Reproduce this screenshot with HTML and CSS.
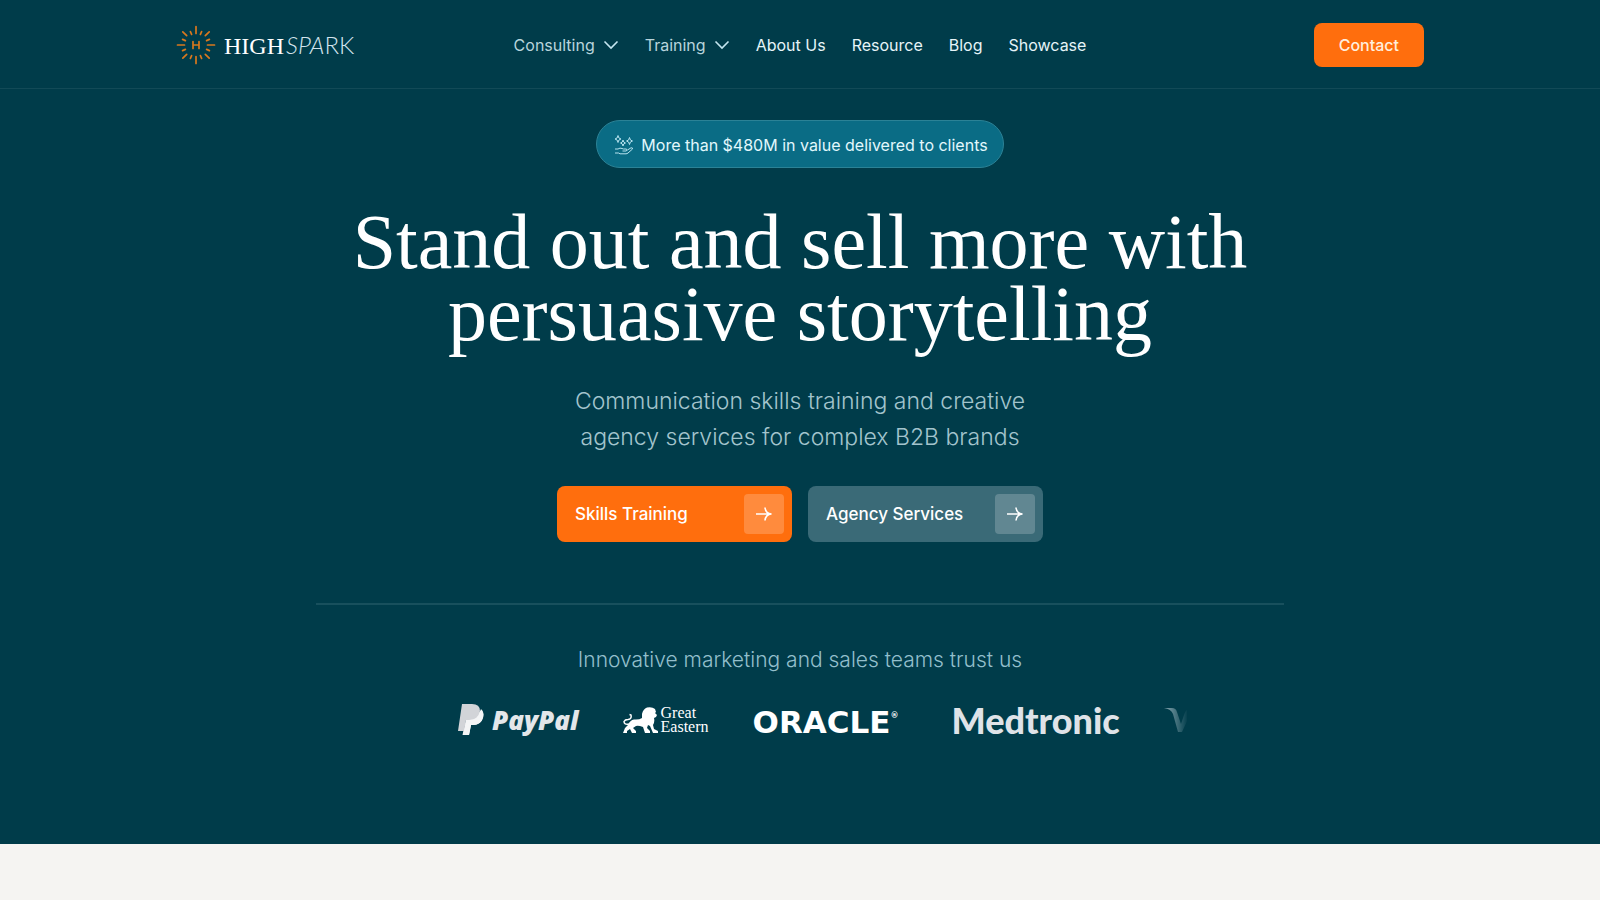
FILE: index.html
```html
<!DOCTYPE html>
<html lang="en">
<head>
<meta charset="utf-8">
<title>HighSpark</title>
<meta name="viewport" content="width=device-width, initial-scale=1">
<link rel="stylesheet" href="styles.css">
</head>
<body>
<header class="header">
  <div class="header-inner">
    <a class="brand" href="#" aria-label="HighSpark home">
      <svg class="brand-mark" viewBox="-20 -20 40 40" aria-hidden="true">
        <g class="rays">
          <path d="M0-18.5V-11.5M0 18.5V11.5M-18.5 0H-11.5M18.5 0H11.5"/>
          <path d="M-13.2-13.2-9.3-9.3M13.2-13.2 9.3-9.3M-13.2 13.2-9.3 9.3M13.2 13.2 9.3 9.3"/>
          <path d="M-5.6-13.4-4.4-10.6M5.6-13.4 4.4-10.6M-5.6 13.4-4.4 10.6M5.6 13.4 4.4 10.6M-13.4-5.6-10.6-4.4M13.4-5.6 10.6-4.4M-13.4 5.6-10.6 4.4M13.4 5.6 10.6 4.4"/>
        </g>
        <path class="mark-bars" d="M-3-3.5V3.5M3-3.5V3.5M-3 0H3"/>
      </svg>
      <span class="brand-name"><span class="brand-high">HIGH</span><span class="brand-spark"><i>SPA</i>RK</span></span>
    </a>
    <nav class="nav" aria-label="Main">
      <button class="nav-link nav-drop" type="button">Consulting
        <svg class="chevron" viewBox="0 0 16 10" aria-hidden="true"><path d="M1.500 1.500 8 8l6.500-6.500"/></svg></button>
      <button class="nav-link nav-drop" type="button">Training
        <svg class="chevron" viewBox="0 0 16 10" aria-hidden="true"><path d="M1.500 1.500 8 8l6.500-6.500"/></svg></button>
      <a class="nav-link" href="#">About Us</a>
      <a class="nav-link" href="#">Resource</a>
      <a class="nav-link" href="#">Blog</a>
      <a class="nav-link" href="#">Showcase</a>
    </nav>
    <a class="contact" href="#">Contact</a>
  </div>
</header>
<main>
  <section class="hero">
    <p class="pill">
      <svg class="pill-icon" viewBox="0 0 20 20" aria-hidden="true">
        <path d="M4 .5Q4.300 3.700 7 4 4.300 4.300 4 7.500 3.700 4.300 1 4 3.700 3.700 4 .5ZM9 5Q9.300 7.700 11.500 8 9.300 8.300 9 11 8.700 8.300 6.500 8 8.700 7.700 9 5ZM15.500 2.500Q15.800 5.700 18.500 6 15.800 6.300 15.500 9.500 15.200 6.300 12.500 6 15.200 5.700 15.500 2.500Z"/>
        <path d="M1 14H4Q6 12.500 8 13.500L9.500 14H12.500Q14 15.500 12 16H8.500M13.500 15 17 12.800Q19 12.500 18.500 14L14 18Q13 18.800 12 18.800H6L4.500 18H1"/>
      </svg>
      More than $480M in value delivered to clients
    </p>
    <h1 class="title">Stand out and sell more with persuasive storytelling</h1>
    <p class="lead">Communication skills training and creative agency services for complex B2B brands</p>
    <div class="actions">
      <a class="action action-primary" href="#">Skills Training
        <span class="action-icon"><svg viewBox="0 0 18 16" aria-hidden="true"><path d="M1 8H16.500M10 1.500Q10.500 7.500 16.500 8 10.500 8.500 10 14.500"/></svg></span></a>
      <a class="action action-secondary" href="#">Agency Services
        <span class="action-icon"><svg viewBox="0 0 18 16" aria-hidden="true"><path d="M1 8H16.500M10 1.500Q10.500 7.500 16.500 8 10.500 8.500 10 14.500"/></svg></span></a>
    </div>
    <hr class="rule">
    <h2 class="trust">Innovative marketing and sales teams trust us</h2>
    <div class="logos">
      <div class="client paypal">
        <svg class="paypal-mark" viewBox="0 0 26 32" aria-hidden="true">
          <path class="pp-front" d="M9 10H17Q22 9 23 5 27 8 25 14 23 21 15 21H13L11 31H4.500Z"/>
          <path class="pp-back" d="M4 0H14Q22 0 22 7 20 16 11 16H8L6 27H0Z"/>
          <path class="pp-front" d="M10 16H12Q20 16 22 9 26 12 24 16 21 21 15 21H13L11 31H5L6 27Z"/>
        </svg>
        <span>PayPal</span>
      </div>
      <div class="client eastern">
        <svg class="lion" viewBox="0 0 36 26" aria-hidden="true">
          <path d="M19 7Q20 2 24 .5 29-.5 32 2L33 5 32 6 34 8 33 10 31 11Q32 15 30 18L31 22 35 24V26H30L27 19 25 18 24 21 27 24V26H22L20 20Q15 18 13 19L10 21 13 24V26H9L7 22 4 24V26H0L2 21 5 18Q7 13 11 12.500 16 13 19 11Z"/>
          <path class="tail" d="M6 17Q1 18 1 14.500 2 12.500 5 12.500 9 12 8 8L6.500 7.500"/>
        </svg>
        <span>Great<br>Eastern</span>
      </div>
      <div class="client oracle">ORACLE<sup>®</sup></div>
      <div class="client medtronic">Medtronic</div>
      <div class="client next" aria-hidden="true">
        <svg viewBox="0 0 24 26"><path d="M0 1H8Q12 1 13 5L17 17 20 8Q21 4 24 2V12L18 25H14L9 7Q7 2 0 1Z"/></svg>
      </div>
    </div>
  </section>
</main>
</body>
</html>
```
FILE: styles.css
```css
* { box-sizing: border-box; }

body {
  margin: 0;
  background: #f5f4f2;
  color: #fff;
  font-family: Inter, "Liberation Sans", sans-serif;
}

a { color: inherit; text-decoration: none; }
p, h1, h2 { margin: 0; }
svg { display: block; fill: none; }

.header {
  background: #003c4a;
  border-bottom: 1px solid #124a57;
  padding: 0 24px;
}

.header-inner {
  display: grid;
  grid-template-columns: 1fr auto 1fr;
  align-items: center;
  max-width: 1248px;
  margin: 0 auto;
  padding: 23px 0 21px;
}

.brand { display: flex; align-items: center; gap: 8px; }
.brand-mark { width: 40px; height: 40px; stroke: #d9781e; stroke-width: 1.700; stroke-linecap: round; }
.brand-name { display: flex; align-items: baseline; gap: 2px; }
.brand-high { font: 24px "Liberation Serif", serif; }
.brand-spark { font: 300 24px Lato, sans-serif; color: #d3e4ee; }

.nav { display: flex; align-items: center; gap: 26px; }
.nav-link { font-size: 16px; line-height: 24px; color: #e6f4f8; white-space: nowrap; }
.nav-drop {
  display: flex;
  align-items: center;
  gap: 8px;
  padding: 0;
  border: 0;
  background: none;
  font-family: inherit;
  color: #b8d4dc;
}
.chevron { width: 16px; height: 10px; stroke: #c4e6f0; stroke-width: 1.600; }

.contact {
  justify-self: end;
  padding: 10px 25px;
  border-radius: 8px;
  background: #ff6e0d;
  color: #ffeedd;
  font-size: 16px;
  font-weight: 500;
  line-height: 24px;
}

.hero {
  display: flex;
  flex-direction: column;
  align-items: center;
  padding: 31px 24px 100px;
  background: #003c4a;
  text-align: center;
}

.pill {
  display: flex;
  align-items: center;
  gap: 7px;
  padding: 12px 15px 10px 17px;
  border: 1px solid #2b8296;
  border-radius: 24px;
  background: #0a6c85;
  color: #e2f8fd;
  font-size: 16px;
  line-height: 24px;
}
.pill-icon { width: 20px; height: 20px; stroke: #b5e2ee; stroke-width: 1; }

.title {
  max-width: 968px;
  margin-top: 38px;
  font: 400 78px/72px "Liberation Serif", serif;
}

.lead {
  max-width: 480px;
  margin-top: 33px;
  color: #a3c4cd;
  font-size: 23px;
  font-weight: 300;
  line-height: 36px;
}

.actions { display: flex; flex-wrap: wrap; justify-content: center; gap: 16px; margin-top: 31px; }
.action {
  display: flex;
  align-items: center;
  justify-content: space-between;
  width: 235px;
  padding: 8px 8px 8px 18px;
  border-radius: 8px;
  font-size: 17px;
  font-weight: 500;
}
.action-primary { background: #ff6e0d; }
.action-secondary { background: #3a6a77; }
.action-icon {
  display: grid;
  place-items: center;
  width: 40px;
  height: 40px;
  border-radius: 4px;
  background: rgba(255, 255, 255, 0.2);
}
.action-icon svg { width: 18px; height: 16px; stroke: #fff; stroke-width: 1.600; }

.rule {
  width: 100%;
  max-width: 968px;
  height: 2px;
  margin: 61px 0 0;
  border: 0;
  background: #18505d;
}

.trust {
  margin-top: 37px;
  color: #93bfcc;
  font-size: 21px;
  font-weight: 300;
  line-height: 36px;
}

.logos {
  display: flex;
  align-items: center;
  gap: 44px;
  width: 100%;
  max-width: 774px;
  margin-top: 18px;
  padding: 6px 0 6px 45px;
  overflow: hidden;
  color: #fff;
}
.client { display: flex; flex-shrink: 0; align-items: center; white-space: nowrap; }
.paypal { gap: 8px; color: #e3e7ea; font: italic 800 26px/32px "Open Sans", sans-serif; }
.paypal-mark { width: 26px; height: 32px; }
.pp-back { fill: #d2d4d8; }
.pp-front { fill: #f4f5f6; }
.eastern { gap: 2px; font: 16px/14px "Liberation Serif", serif; text-align: left; }
.lion { width: 36px; height: 26px; fill: #fff; }
.tail { fill: none; stroke: #fff; stroke-width: 1.500; }
.oracle { padding: 4px 9px 0 0; font: 700 31px/32px "DejaVu Sans", sans-serif; }
.oracle sup { align-self: flex-start; font-size: 8px; line-height: 20px; }
.medtronic { color: #dfe3e8; font: 900 36px/36px Lato, sans-serif; }
.next svg {
  width: 24px;
  height: 26px;
  fill: #8aa9b2;
  mask-image: linear-gradient(to right, #000, transparent);
}
```
